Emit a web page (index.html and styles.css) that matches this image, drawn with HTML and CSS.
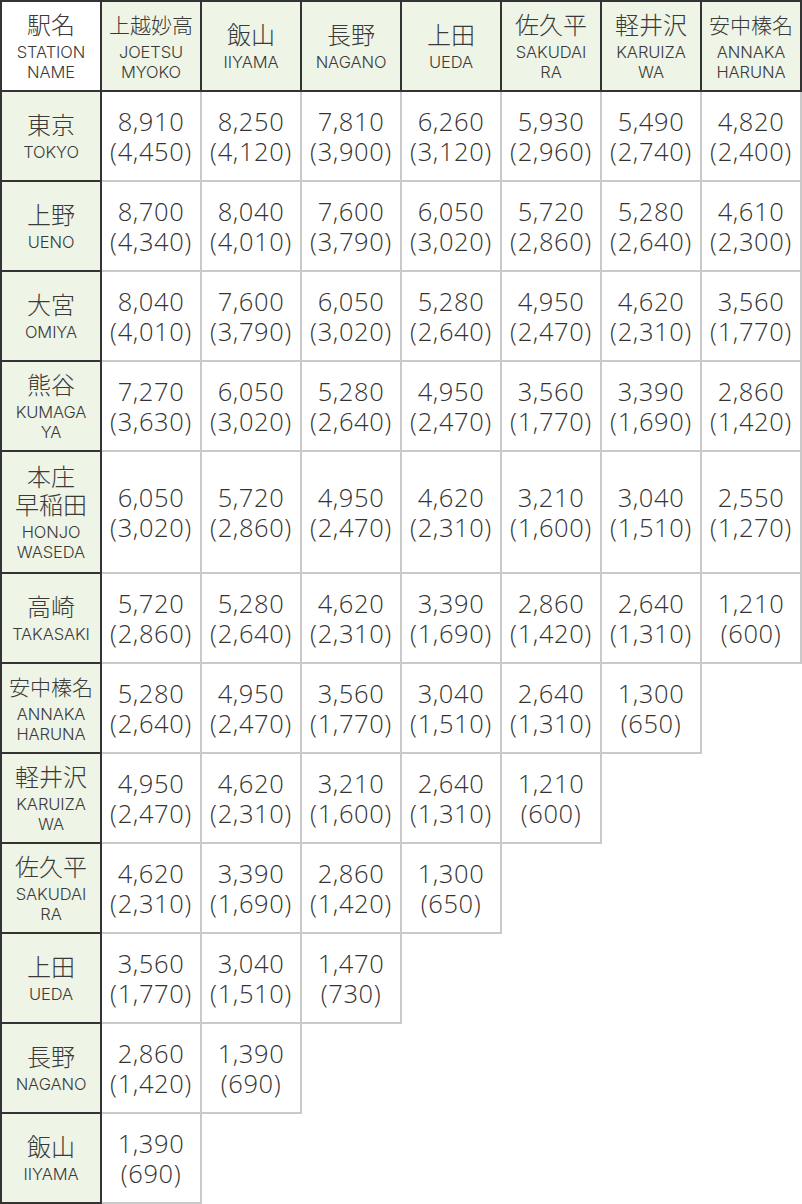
FILE: index.html
```html
<!DOCTYPE html>
<html lang="ja">
<head>
<meta charset="utf-8">
<title>運賃表</title>
<link rel="stylesheet" href="styles.css">
</head>
<body>
<table class="fares">
  <thead>
    <tr class="head-row">
      <th class="corner"><span class="jp">駅名</span><span class="en">STATION<br>NAME</span></th>
      <th class="col"><span class="jp jp-long">上越妙高</span><span class="en">JOETSU<br>MYOKO</span></th>
      <th class="col"><span class="jp">飯山</span><span class="en">IIYAMA</span></th>
      <th class="col"><span class="jp">長野</span><span class="en">NAGANO</span></th>
      <th class="col"><span class="jp">上田</span><span class="en">UEDA</span></th>
      <th class="col"><span class="jp">佐久平</span><span class="en">SAKUDAI<br>RA</span></th>
      <th class="col"><span class="jp">軽井沢</span><span class="en">KARUIZA<br>WA</span></th>
      <th class="col"><span class="jp jp-long">安中榛名</span><span class="en">ANNAKA<br>HARUNA</span></th>
    </tr>
  </thead>
  <tbody>
    <tr>
      <th class="row"><span class="jp">東京</span><span class="en">TOKYO</span></th>
      <td>8,910<br>(4,450)</td><td>8,250<br>(4,120)</td><td>7,810<br>(3,900)</td><td>6,260<br>(3,120)</td><td>5,930<br>(2,960)</td><td>5,490<br>(2,740)</td><td>4,820<br>(2,400)</td>
    </tr>
    <tr>
      <th class="row"><span class="jp">上野</span><span class="en">UENO</span></th>
      <td>8,700<br>(4,340)</td><td>8,040<br>(4,010)</td><td>7,600<br>(3,790)</td><td>6,050<br>(3,020)</td><td>5,720<br>(2,860)</td><td>5,280<br>(2,640)</td><td>4,610<br>(2,300)</td>
    </tr>
    <tr>
      <th class="row"><span class="jp">大宮</span><span class="en">OMIYA</span></th>
      <td>8,040<br>(4,010)</td><td>7,600<br>(3,790)</td><td>6,050<br>(3,020)</td><td>5,280<br>(2,640)</td><td>4,950<br>(2,470)</td><td>4,620<br>(2,310)</td><td>3,560<br>(1,770)</td>
    </tr>
    <tr>
      <th class="row"><span class="jp">熊谷</span><span class="en">KUMAGA<br>YA</span></th>
      <td>7,270<br>(3,630)</td><td>6,050<br>(3,020)</td><td>5,280<br>(2,640)</td><td>4,950<br>(2,470)</td><td>3,560<br>(1,770)</td><td>3,390<br>(1,690)</td><td>2,860<br>(1,420)</td>
    </tr>
    <tr class="tall">
      <th class="row"><span class="jp">本庄<br>早稲田</span><span class="en">HONJO<br>WASEDA</span></th>
      <td>6,050<br>(3,020)</td><td>5,720<br>(2,860)</td><td>4,950<br>(2,470)</td><td>4,620<br>(2,310)</td><td>3,210<br>(1,600)</td><td>3,040<br>(1,510)</td><td>2,550<br>(1,270)</td>
    </tr>
    <tr>
      <th class="row"><span class="jp">高崎</span><span class="en">TAKASAKI</span></th>
      <td>5,720<br>(2,860)</td><td>5,280<br>(2,640)</td><td>4,620<br>(2,310)</td><td>3,390<br>(1,690)</td><td>2,860<br>(1,420)</td><td>2,640<br>(1,310)</td><td>1,210<br>(600)</td>
    </tr>
    <tr>
      <th class="row"><span class="jp jp-long">安中榛名</span><span class="en">ANNAKA<br>HARUNA</span></th>
      <td>5,280<br>(2,640)</td><td>4,950<br>(2,470)</td><td>3,560<br>(1,770)</td><td>3,040<br>(1,510)</td><td>2,640<br>(1,310)</td><td>1,300<br>(650)</td>
    </tr>
    <tr>
      <th class="row"><span class="jp">軽井沢</span><span class="en">KARUIZA<br>WA</span></th>
      <td>4,950<br>(2,470)</td><td>4,620<br>(2,310)</td><td>3,210<br>(1,600)</td><td>2,640<br>(1,310)</td><td>1,210<br>(600)</td>
    </tr>
    <tr>
      <th class="row"><span class="jp">佐久平</span><span class="en">SAKUDAI<br>RA</span></th>
      <td>4,620<br>(2,310)</td><td>3,390<br>(1,690)</td><td>2,860<br>(1,420)</td><td>1,300<br>(650)</td>
    </tr>
    <tr>
      <th class="row"><span class="jp">上田</span><span class="en">UEDA</span></th>
      <td>3,560<br>(1,770)</td><td>3,040<br>(1,510)</td><td>1,470<br>(730)</td>
    </tr>
    <tr>
      <th class="row"><span class="jp">長野</span><span class="en">NAGANO</span></th>
      <td>2,860<br>(1,420)</td><td>1,390<br>(690)</td>
    </tr>
    <tr>
      <th class="row"><span class="jp">飯山</span><span class="en">IIYAMA</span></th>
      <td>1,390<br>(690)</td>
    </tr>
  </tbody>
</table>
</body>
</html>
```

FILE: styles.css
```css
html, body {
  margin: 0;
  padding: 0;
  background: #ffffff;
}

.fares {
  border-collapse: separate;
  border-spacing: 0;
  table-layout: fixed;
  width: 802px;
  color: #3a3a3a;
}

.fares th,
.fares td {
  box-sizing: border-box;
  padding: 0;
  text-align: center;
  vertical-align: middle;
  font-weight: normal;
  white-space: nowrap;
}

.fares th {
  background: #eef4e6;
  border-right: 2px solid #333333;
  border-bottom: 2px solid #333333;
}

.fares td {
  width: 100px;
  height: 90px;
  border-right: 2px solid #c9c9c9;
  border-bottom: 2px solid #c9c9c9;
  font-family: "Open Sans", "Noto Sans", "Liberation Sans", sans-serif;
  font-weight: 300;
  font-size: 25.5px;
  letter-spacing: 0.6px;
  line-height: 30px;
  color: #333333;
}

.head-row th {
  border-top: 2px solid #333333;
  height: 92px;
  width: 100px;
}

.fares .corner {
  width: 102px;
  border-left: 2px solid #333333;
  background: #ffffff;
}

.fares .row {
  width: 102px;
  height: 90px;
  border-left: 2px solid #333333;
}

.tall td,
.tall .row {
  height: 122px;
}

.jp {
  display: block;
  font-family: "Noto Sans CJK JP", "Noto Sans", sans-serif;
  font-weight: 300;
  font-size: 24px;
  line-height: 28px;
}

.jp-long {
  font-size: 21px;
}

.en {
  display: block;
  margin-top: 4px;
  font-family: Inter, "Liberation Sans", Arial, sans-serif;
  font-weight: 350;
  font-size: 16.5px;
  line-height: 20px;
  letter-spacing: -0.1px;
}
```
